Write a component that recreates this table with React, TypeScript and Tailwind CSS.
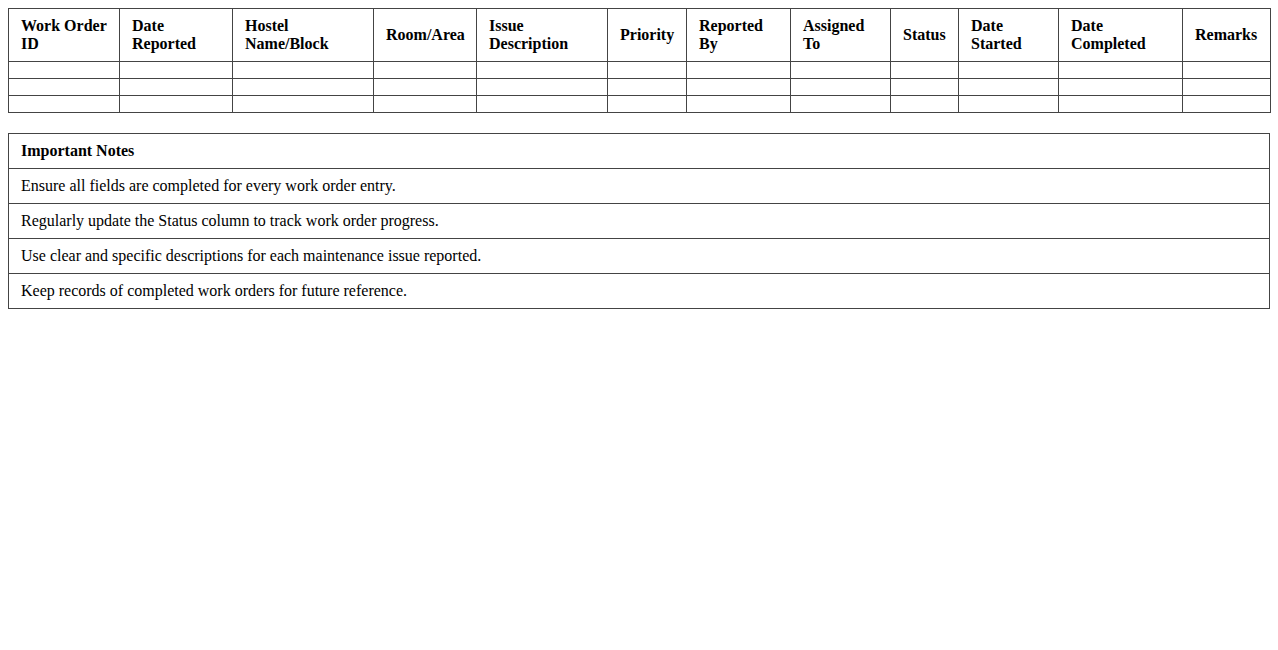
const headers = [
  "Work Order ID",
  "Date Reported",
  "Hostel Name/Block",
  "Room/Area",
  "Issue Description",
  "Priority",
  "Reported By",
  "Assigned To",
  "Status",
  "Date Started",
  "Date Completed",
  "Remarks",
];

const colWidths = [
  "w-[111px]",
  "w-[113px]",
  "w-[141px]",
  "w-[103px]",
  "w-[131px]",
  "w-[79px]",
  "w-[104px]",
  "w-[100px]",
  "w-[68px]",
  "w-[100px]",
  "w-[124px]",
  "w-[88px]",
];

const notes = [
  "Ensure all fields are completed for every work order entry.",
  "Regularly update the Status column to track work order progress.",
  "Use clear and specific descriptions for each maintenance issue reported.",
  "Keep records of completed work orders for future reference.",
];

export default function App() {
  return (
    <div className="p-2 bg-white text-black text-base font-['Liberation_Serif','Times_New_Roman',serif]">
      {/* work order log */}
      <table className="w-full table-fixed border-collapse">
        <colgroup>
          {colWidths.map((w, i) => (
            <col key={i} className={w} />
          ))}
        </colgroup>
        <thead>
          <tr>
            {headers.map((h) => (
              <th
                key={h}
                className="border border-[#444] px-3 py-2 text-left align-middle font-bold leading-[18px]"
              >
                {h}
              </th>
            ))}
          </tr>
        </thead>
        <tbody>
          {Array.from({ length: 3 }).map((_, r) => (
            <tr key={r}>
              {headers.map((h) => (
                <td key={h} className="border border-[#444] px-3 py-2 h-[17px]" />
              ))}
            </tr>
          ))}
        </tbody>
      </table>

      {/* notes */}
      <table className="w-full border-collapse mt-5">
        <thead>
          <tr>
            <th className="border border-[#444] px-3 py-2 text-left font-bold leading-[18px]">
              Important Notes
            </th>
          </tr>
        </thead>
        <tbody>
          {notes.map((n) => (
            <tr key={n}>
              <td className="border border-[#444] px-3 py-2 leading-[18px]">{n}</td>
            </tr>
          ))}
        </tbody>
      </table>
    </div>
  );
}
